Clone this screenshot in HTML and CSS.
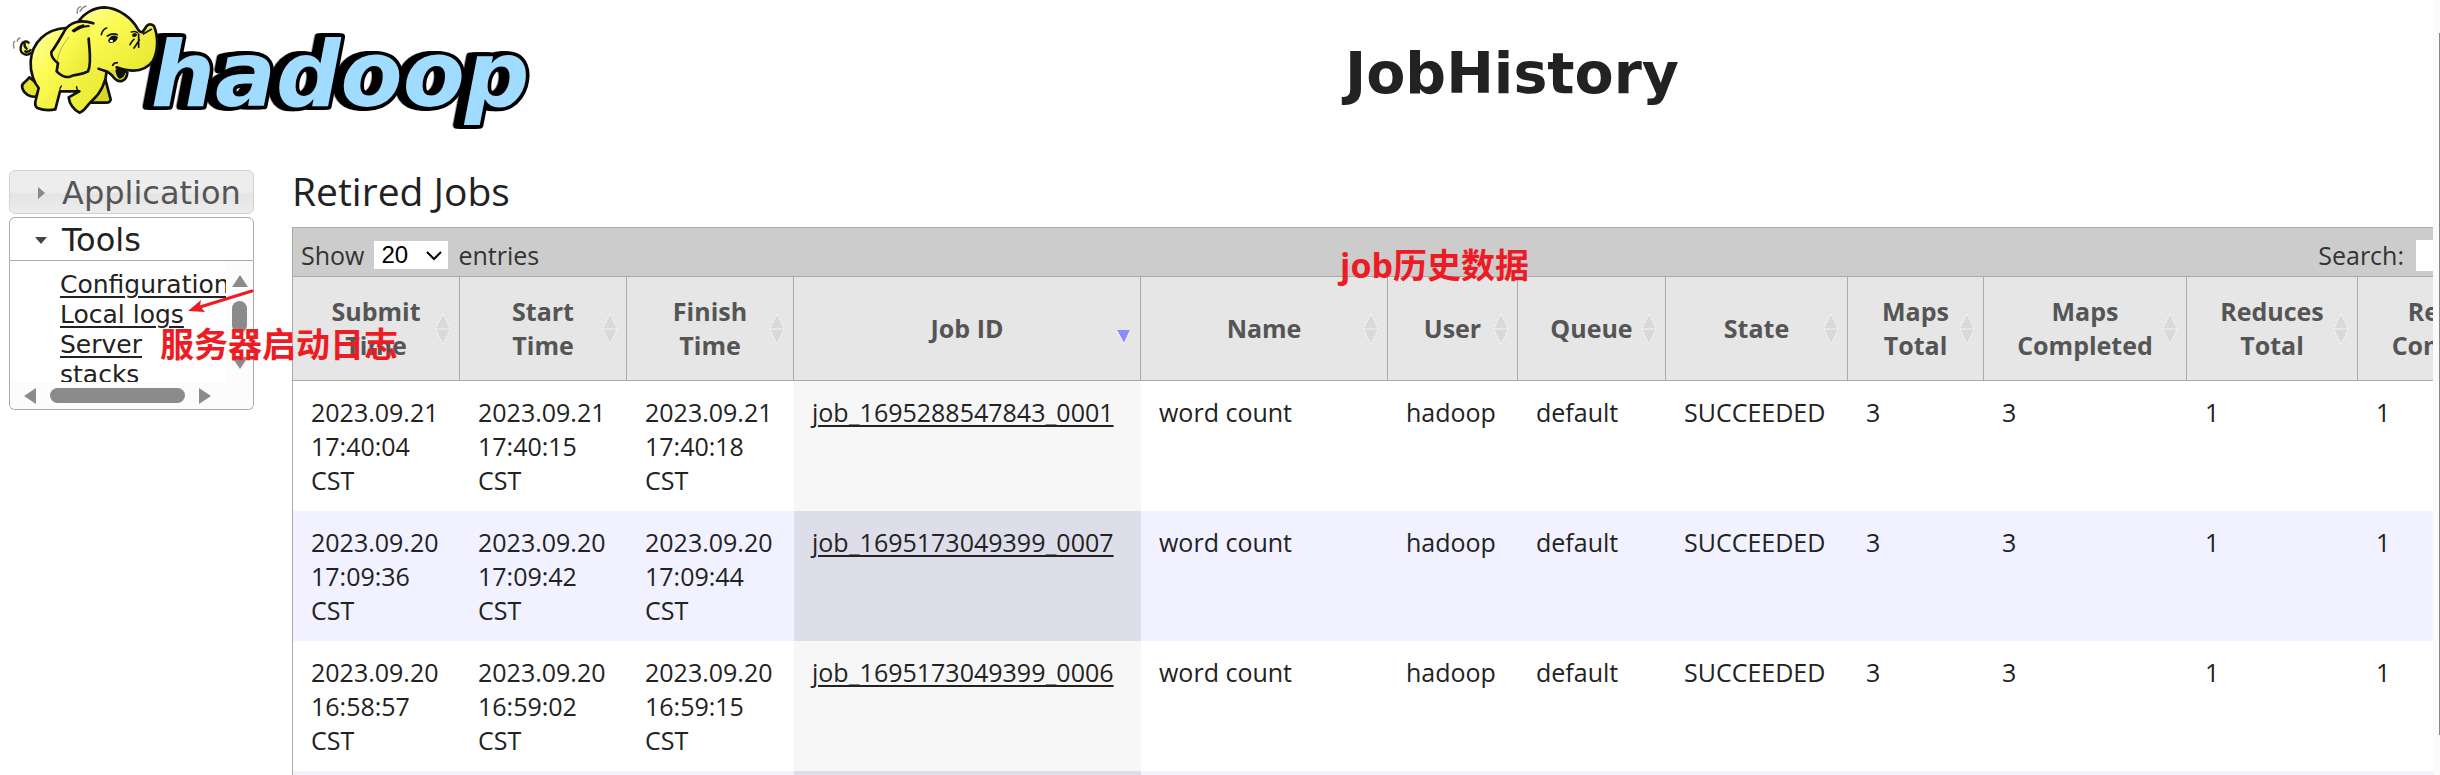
FILE: index.html
```html
<!DOCTYPE html>
<html lang="en">
<head>
<meta charset="utf-8">
<title>JobHistory</title>
<link rel="stylesheet" href="styles.css">
</head>
<body>
<div class="window">
  <div class="page">
    <header class="header">
      <a class="logo" href="#" aria-label="hadoop">
        <svg class="logo-art" viewBox="0 0 1680 390">
          <defs>
            <linearGradient id="skin" x1="0" y1="0" x2="1" y2="1">
              <stop offset="0" stop-color="#ffffb0"/>
              <stop offset="0.35" stop-color="#fbfb54"/>
              <stop offset="1" stop-color="#e6e52c"/>
            </linearGradient>
          </defs>
          <text class="wordmark" x="452" y="318">hadoop</text>
          <g stroke="#111" stroke-width="8" stroke-linejoin="round" stroke-linecap="round" fill="url(#skin)">
            <path d="M92 160C76 170 60 160 62 142C64 126 76 120 86 128M80 146Q72 140 74 132M92 150Q84 158 76 154" stroke-width="7"/>
            <path d="M88 232C76 248 62 250 67 264C72 282 90 292 108 290L122 260Z" fill="#e6e52c"/>
            <path d="M316 238L332 298Q332 308 318 308L272 308L290 262Z" fill="#d8d724"/>
            <path d="M196 84C140 88 96 124 92 184C90 220 104 250 116 264L106 306Q104 318 112 324Q138 334 166 328L180 274L238 274L206 292C208 312 222 330 238 338C254 334 260 316 276 302C302 280 318 246 320 214L290 100Z"/>
            <path d="M296 206C320 212 336 222 344 236C358 250 380 244 382 218L350 196Z" fill="#e0df30"/>
            <path d="M346 200L376 212Q376 232 360 236Q346 232 346 200Z" fill="#111" stroke="none"/>
            <path d="M236 64C252 40 282 22 314 22C356 24 396 54 414 88Q420 98 428 96L440 78Q450 68 462 78C476 112 474 156 458 184C436 214 396 218 350 202Q340 198 346 196L350 208Q320 216 280 196L224 120Z" stroke="none"/>
            <path d="M236 64C252 40 282 22 314 22C356 24 396 54 414 88Q420 98 428 96L440 78Q450 68 462 78C476 112 474 156 458 184C436 214 396 218 350 202" fill="none"/>
            <path d="M280 70C240 56 208 68 194 92C180 116 166 142 154 156C152 172 164 182 174 190L170 214C182 226 196 234 210 230C226 222 244 226 264 214C276 190 268 150 266 116" />
            <path d="M218 92Q232 80 250 76M222 94Q242 80 266 78" stroke-width="6"/>
            <path d="M304 104Q308 88 320 84M322 108Q338 98 352 104M394 96Q404 92 412 98M390 134Q396 122 402 118M402 144Q412 130 418 120M416 142L416 102M430 102Q444 94 454 88M338 196Q342 188 352 188" fill="none" stroke-width="5"/>
            <path d="M324 122C330 106 344 102 354 112C350 126 338 132 328 128Z" fill="#111" stroke="none"/>
            <ellipse cx="334" cy="123" rx="5" ry="4" fill="#fff" stroke="none"/>
            <path d="M396 104Q404 94 412 104Q406 114 398 110Z" fill="#111" stroke="none"/>
            <path d="M180 274Q178 264 184 258M238 274Q228 268 230 260" fill="none" stroke-width="4"/>
            <path d="M42 144Q38 128 44 124M52 124Q52 116 60 114M232 40Q230 24 242 20M240 34Q246 22 258 18" fill="none" stroke="#888" stroke-width="4"/>
            <path d="M206 112Q176 148 172 182" fill="none" stroke="#8f8f28" stroke-width="2"/>
          </g>
        </svg>
      </a>
      <h1 class="title">JobHistory</h1>
    </header>
    <div class="body">
      <nav class="sidebar">
        <button class="fold fold-closed" type="button">
          <svg class="fold-mark" viewBox="0 0 12 12"><path d="M3 0L10 6L3 12Z" fill="#888"/></svg>Application
        </button>
        <button class="fold fold-open" type="button">
          <svg class="fold-mark" viewBox="0 0 12 12"><path d="M0 3H12L6 10Z" fill="#454545"/></svg>Tools
        </button>
        <div class="panel">
          <div class="panel-view">
            <ul class="links">
              <li><a href="#">Configuration</a></li>
              <li><a href="#">Local logs</a></li>
              <li><a href="#">Server<br>stacks</a></li>
            </ul>
          </div>
          <div class="bar bar-v">
            <svg class="arrow" viewBox="0 0 16 12"><path d="M8 0L16 12H0Z"/></svg>
            <div class="thumb-v"></div>
            <svg class="arrow" viewBox="0 0 16 12"><path d="M8 12L0 0H16Z"/></svg>
          </div>
          <div class="bar bar-h">
            <svg class="arrow-side" viewBox="0 0 12 16"><path d="M0 8L12 0V16Z"/></svg>
            <div class="thumb-h"></div>
            <svg class="arrow-side" viewBox="0 0 12 16"><path d="M12 8L0 0V16Z"/></svg>
          </div>
        </div>
      </nav>
      <main class="content">
        <h2 class="subtitle">Retired Jobs</h2>
        <div class="table-view">
          <div class="table-box">
            <div class="toolbar">
              <label class="length">Show
                <span class="select-box">
                  <select class="select"><option>20</option><option>40</option><option>60</option></select>
                  <svg class="chevron" viewBox="0 0 16 10"><path d="M1 1L8 8L15 1" fill="none" stroke="#000" stroke-width="2"/></svg>
                </span>
                entries</label>
              <label class="search">Search: <input class="search-input" type="text"></label>
            </div>
            <table class="jobs">
              <colgroup>
                <col class="c-time"><col class="c-time"><col class="c-time"><col class="c-id"><col class="c-name"><col class="c-user"><col class="c-queue"><col class="c-state"><col class="c-maps"><col class="c-done"><col class="c-reduces"><col class="c-done">
              </colgroup>
              <thead><tr id="head"></tr></thead>
              <tbody id="rows"></tbody>
            </table>
          </div>
        </div>
      </main>
    </div>
  </div>
  <div class="page-scroll"><div class="page-thumb"></div></div>
  <svg class="pointer" viewBox="0 0 66 26"><path d="M64 3L12 19" stroke="#ed1c24" stroke-width="3" fill="none" stroke-linecap="round"/><path d="M0 23L13 12L12 18L17 24Z" fill="#ed1c24"/></svg>
  <div class="note note-logs">服务器启动日志</div>
  <div class="note note-jobs">job历史数据</div>
</div>
<script src="jobs.js"></script>
</body>
</html>
```

FILE: styles.css
```css
* { box-sizing: border-box; }

body {
  margin: 0;
  background: #fff;
  color: #222;
  font: 25px/34px "Open Sans", "Noto Sans", sans-serif;
}

a { color: inherit; }

.window {
  position: relative;
  display: flex;
  height: 100vh;
  overflow: hidden;
}

.page { flex: 1; min-width: 0; }

.page-scroll {
  display: flex;
  flex: 0 0 7px;
  padding: 33px 0 40px 6px;
  background: #fbfbfb;
}

.page-thumb { flex: 1; background: #888; }

/* Header */

.header {
  display: flex;
  align-items: center;
  height: 146px;
}

.logo {
  flex: 0 0 591px;
  align-self: flex-start;
  text-decoration: none;
}

.logo-art { display: block; width: 560px; height: 130px; }

.wordmark {
  font: italic bold 271px "DejaVu Sans", sans-serif;
  fill: #9fdcff;
  stroke: #000;
  stroke-width: 22px;
  stroke-linejoin: round;
  paint-order: stroke;
  filter: drop-shadow(-12px 0 0 #000) drop-shadow(-10px 0 0 #000);
}

.title {
  flex: 1;
  margin: 0;
  text-align: center;
  font: bold 57px/68px "DejaVu Sans", sans-serif;
}

.body { display: flex; gap: 38px; padding-left: 9px; }

/* Sidebar */

.sidebar {
  flex: 0 0 245px;
  min-width: 0;
  padding-top: 24px;
  font-family: "DejaVu Sans", sans-serif;
}

.fold {
  display: flex;
  align-items: center;
  gap: 15px;
  width: 100%;
  height: 44px;
  padding: 2px 0 0 25px;
  border: 1px solid #d3d3d3;
  border-radius: 6px;
  font: 32px/40px "DejaVu Sans", sans-serif;
  text-align: left;
}

.fold-closed {
  margin-bottom: 3px;
  background: linear-gradient(#ededed 50%, #e4e4e4 55%, #ededed);
  color: #555;
}

.fold-open {
  border-color: #aaa;
  border-radius: 6px 6px 0 0;
  background: #fff;
  color: #222;
}

.fold-mark { width: 12px; height: 12px; }

.panel {
  display: grid;
  grid-template: 121px 27px / 1fr 27px;
  border: 1px solid #aaa;
  border-top: 0;
  border-radius: 0 0 6px 6px;
  overflow: hidden;
}

.panel-view { overflow: hidden; padding: 9px 0 0 50px; }

.links { margin: 0; padding: 0; list-style: none; font-size: 25px; line-height: 30px; }

.links a { text-underline-offset: 3px; text-decoration-thickness: 2px; }

.bar { display: flex; align-items: center; background: #fcfcfc; fill: #8b8b8b; }

.bar-v { flex-direction: column; padding: 14px 0 13px; }

.bar-h { grid-column: 1 / -1; gap: 14px; padding-left: 14px; }

.arrow { width: 16px; height: 12px; }
.arrow-side { width: 12px; height: 16px; }

.thumb-v {
  width: 15px;
  height: 32px;
  margin: 14px 0 auto;
  border-radius: 8px;
  background: #8b8b8b;
}

.thumb-h { width: 135px; height: 15px; border-radius: 8px; background: #8b8b8b; }

/* Job table */

.content { flex: 1; min-width: 0; }

.subtitle { margin: 0; padding: 19px 0 10px; font-size: 39px; line-height: 52px; font-weight: normal; }

.table-view { overflow: hidden; }

.table-box { width: 2270px; border: 1px solid #aaa; }

.toolbar {
  display: flex;
  justify-content: space-between;
  align-items: center;
  height: 48px;
  padding: 6px 8px 0 8px;
  background: #ccc;
  color: #333;
}

.length, .search { display: flex; align-items: center; gap: 10px; }

.search { gap: 12px; }

.select-box { position: relative; display: flex; }

.select {
  appearance: none;
  width: 74px;
  height: 28px;
  padding: 0 7px;
  border: 0;
  border-radius: 0;
  background: #fff;
  color: #000;
  font: 24px/28px "Liberation Sans", sans-serif;
}

.chevron { position: absolute; right: 6px; top: 10px; width: 16px; height: 10px; pointer-events: none; }

.search-input { width: 137px; height: 31px; border: 0; background: #fff; font: inherit; }

.jobs { width: 100%; table-layout: fixed; border-collapse: separate; border-spacing: 0; }

.c-time { width: 167px; }
.c-id { width: 347px; }
.c-name { width: 247px; }
.c-user { width: 130px; }
.c-queue { width: 148px; }
.c-state { width: 182px; }
.c-maps { width: 136px; }
.c-done { width: 203px; }
.c-reduces { width: 171px; }

.jobs th {
  position: relative;
  height: 105px;
  padding: 0 17px 2px;
  border: solid #aaa;
  border-width: 1px 1px 1px 0;
  background: #e6e6e6;
  color: #555;
}

.jobs th:last-child { border-right: 0; }

.sort { position: absolute; right: 8px; top: 36px; width: 16px; height: 32px; }

.jobs td { padding: 14px 0 14px 18px; vertical-align: top; }

.jobs .time { padding-right: 16px; }

.jobs .sorted { background: #f7f7f7; }

.jobs tbody tr:nth-child(even) { background: #f1f1ff; }
.jobs tbody tr:nth-child(even) .sorted { background: #dedeea; }

.jobs a { text-underline-offset: 3px; text-decoration-thickness: 2px; }

/* Callouts over the page */

.note {
  position: absolute;
  color: #ed1c24;
  font: bold 34px/44px "Open Sans", "Noto Sans CJK SC", sans-serif;
  white-space: nowrap;
}

.note-logs { left: 160px; top: 322px; }
.note-jobs { left: 1340px; top: 243px; }

.pointer { position: absolute; left: 188px; top: 288px; width: 66px; height: 26px; }
```

FILE: jobs.js
```js
const columns = ["Submit Time", "Start Time", "Finish Time", "Job ID", "Name", "User",
  "Queue", "State", "Maps Total", "Maps Completed", "Reduces Total", "Reduces Completed"];

const jobs = [
  ["2023.09.21 17:40:04 CST", "2023.09.21 17:40:15 CST", "2023.09.21 17:40:18 CST", "job_1695288547843_0001"],
  ["2023.09.20 17:09:36 CST", "2023.09.20 17:09:42 CST", "2023.09.20 17:09:44 CST", "job_1695173049399_0007"],
  ["2023.09.20 16:58:57 CST", "2023.09.20 16:59:02 CST", "2023.09.20 16:59:15 CST", "job_1695173049399_0006"],
  ["", "", "", ""]
];

const both = '<svg class="sort" viewBox="0 0 16 32"><path d="M8 1L15 15H1ZM8 31L1 17H15Z" fill="#d9d9d9"/><path d="M8 1L15 15V17L8 31L1 17V15Z" fill="none" stroke="#f6f6f6" stroke-dasharray="3 1"/></svg>';
const down = '<svg class="sort" viewBox="0 0 16 32"><path d="M1 17H14L8 30Z" fill="#8c8cff"/><path d="M1 18L8 31L14 18" fill="none" stroke="#f4f4f4"/></svg>';

document.getElementById("head").innerHTML = columns
  .map(name => `<th scope="col">${name.replace(" Time", "<br>Time").replace(" Total", "<br>Total").replace(" Completed", "<br>Completed")}${name === "Job ID" ? down : both}</th>`)
  .join("");

document.getElementById("rows").innerHTML = jobs.map(job => {
  const times = job.slice(0, 3).map(t => `<td class="time">${t}</td>`).join("");
  const rest = job[3] ? ["word count", "hadoop", "default", "SUCCEEDED", 3, 3, 1, 1] : Array(8).fill("");
  const link = job[3] ? `<a href="#">${job[3]}</a>` : "";
  return `<tr>${times}<td class="sorted">${link}</td>${rest.map(v => `<td>${v}</td>`).join("")}</tr>`;
}).join("");
```
